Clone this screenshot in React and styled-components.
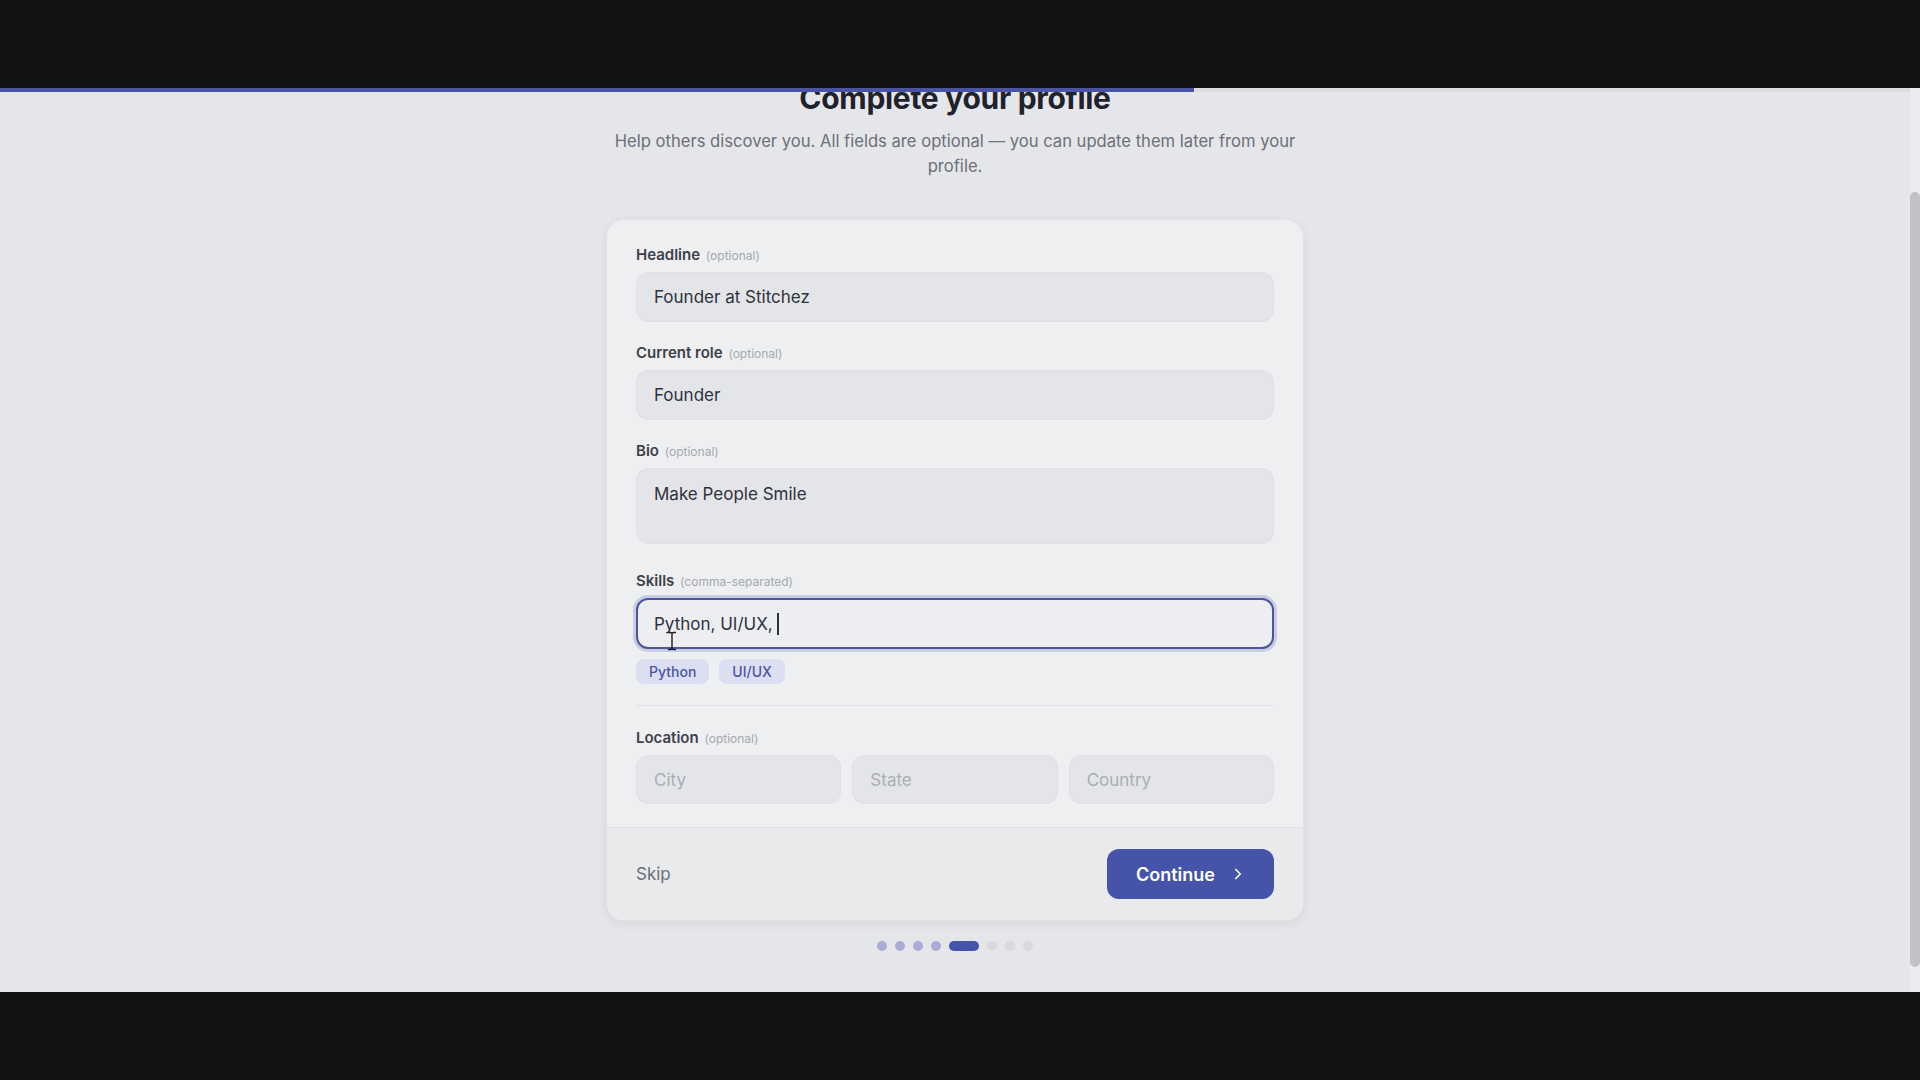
import React, { useLayoutEffect, useRef } from "react";
import styled, { createGlobalStyle } from "styled-components";
import { ChevronRight } from "lucide-react";

const STEPS = 8;
const CURRENT = 5;
const SCROLL_TOP = 121;

const GlobalStyle = createGlobalStyle`
  html, body {
    margin: 0;
    padding: 0;
    height: 100%;
    overflow: hidden;
    background: #111213;
  }
  * { box-sizing: border-box; }
  body {
    font-family: Inter, "Noto Sans", "Liberation Sans", sans-serif;
  }
`;

export default function App() {
  const scrollRef = useRef(null);

  // the capture shows the page scrolled down a bit
  useLayoutEffect(() => {
    if (scrollRef.current) scrollRef.current.scrollTop = SCROLL_TOP;
  }, []);

  return (
    <Screen>
      <GlobalStyle />
      <Letterbox />
      <Viewport>
        <ProgressTrack>
          <ProgressFill style={{ width: `${(CURRENT / STEPS) * 100}%` }} />
        </ProgressTrack>
        <Scroller ref={scrollRef}>
          <Page>
            <Title>Complete your profile</Title>
            <Subtitle>
              Help others discover you. All fields are optional — you can update them later from your
              profile.
            </Subtitle>

            <Card>
              <CardBody>
                <Field>
                  <Label>
                    Headline <Hint>(optional)</Hint>
                  </Label>
                  <Input defaultValue="Founder at Stitchez" />
                </Field>

                <Field>
                  <Label>
                    Current role <Hint>(optional)</Hint>
                  </Label>
                  <Input defaultValue="Founder" />
                </Field>

                <Field $gap={27}>
                  <Label>
                    Bio <Hint>(optional)</Hint>
                  </Label>
                  <TextArea defaultValue="Make People Smile" />
                </Field>

                <Field $gap={0}>
                  <Label>
                    Skills <Hint>(comma-separated)</Hint>
                  </Label>
                  <SkillBox role="textbox">
                    <span>Python, UI/UX,&nbsp;</span>
                    <Caret />
                    <MousePointer width="10" height="20" viewBox="0 0 10 20">
                      <path d="M1.5 1.5 H3.5 Q5 1.5 5 3 Q5 1.5 6.5 1.5 H8.5 M5 3 V17 M1.5 18.5 H3.5 Q5 18.5 5 17 Q5 18.5 6.5 18.5 H8.5" />
                    </MousePointer>
                  </SkillBox>
                  <Chips>
                    <Chip>Python</Chip>
                    <Chip>UI/UX</Chip>
                  </Chips>
                </Field>

                <Divider />

                <Field $gap={0}>
                  <Label>
                    Location <Hint>(optional)</Hint>
                  </Label>
                  <LocationRow>
                    <Input $h={49} placeholder="City" />
                    <Input $h={49} placeholder="State" />
                    <Input $h={49} placeholder="Country" />
                  </LocationRow>
                </Field>
              </CardBody>

              <CardFooter>
                <SkipButton>Skip</SkipButton>
                <PrimaryButton>
                  Continue
                  <ChevronRight size={18} strokeWidth={2.2} />
                </PrimaryButton>
              </CardFooter>
            </Card>

            <Dots>
              {Array.from({ length: STEPS }, (_, i) => (
                <Dot key={i} $state={i + 1 < CURRENT ? "done" : i + 1 === CURRENT ? "active" : "todo"} />
              ))}
            </Dots>
          </Page>
        </Scroller>
        <ScrollTrack>
          <ScrollThumb />
        </ScrollTrack>
      </Viewport>
      <Letterbox />
    </Screen>
  );
}

const Screen = styled.div`
  height: 100vh;
  display: flex;
  flex-direction: column;
  background: #111213;
`;

const Letterbox = styled.div`
  height: 88px;
  flex: none;
  background: #111213;
`;

const Viewport = styled.div`
  position: relative;
  flex: 1;
  min-height: 0;
  display: flex;
  background: #e5e6e9;
`;

const ProgressTrack = styled.div`
  position: absolute;
  top: 0;
  left: 0;
  right: 10px;
  height: 4px;
  background: #dcdde1;
  z-index: 2;
`;

const ProgressFill = styled.div`
  height: 100%;
  background: #4a55a6;
`;

const Scroller = styled.div`
  flex: 1;
  height: 100%;
  overflow-y: auto;
  scrollbar-width: none;

  &::-webkit-scrollbar {
    display: none;
  }
`;

const ScrollTrack = styled.div`
  flex: none;
  width: 10px;
  display: flex;
  flex-direction: column;
  background: #ececee;
`;

const ScrollThumb = styled.div`
  margin-top: 104px;
  height: 775px;
  border-radius: 5px;
  background: #c2c2c4;
`;

const Page = styled.div`
  display: flex;
  flex-direction: column;
  align-items: center;
  padding: 112px 0 84px;
`;

const Title = styled.h1`
  margin: 0;
  font-size: 30px;
  line-height: 38px;
  font-weight: 700;
  color: #1f222b;
  letter-spacing: -0.3px;
`;

const Subtitle = styled.p`
  margin: 12px 0 0;
  max-width: 700px;
  text-align: center;
  font-size: 16.6px;
  line-height: 25px;
  color: #6c707a;
`;

const Card = styled.div`
  margin-top: 40px;
  width: 698px;
  background: #eeeff1;
  border: 1px solid #e1e2e5;
  border-radius: 18px;
  box-shadow: 0 3px 10px rgba(20, 24, 40, 0.07);
  overflow: hidden;
`;

const CardBody = styled.div`
  display: flex;
  flex-direction: column;
  padding: 25px 29px 23px;
`;

const Field = styled.div`
  display: flex;
  flex-direction: column;
  margin-bottom: ${(p) => (p.$gap ?? 21)}px;
`;

const Label = styled.label`
  display: block;
  font-size: 15px;
  line-height: 20px;
  font-weight: 600;
  color: #3d414a;
  margin-bottom: 6px;
`;

const Hint = styled.span`
  font-size: 12px;
  font-weight: 400;
  color: #a4a8b0;
  margin-left: 2px;
`;

const Input = styled.input`
  width: 100%;
  height: ${(p) => p.$h ?? 50}px;
  padding: 0 17px;
  border: 1px solid #dfe0e4;
  border-radius: 12px;
  background: #e4e5e8;
  font-family: inherit;
  font-size: 17px;
  color: #2e323d;
  outline: none;

  &::placeholder {
    color: #a9adb5;
  }
`;

const TextArea = styled.textarea`
  width: 100%;
  height: 76px;
  padding: 12px 17px;
  border: 1px solid #dfe0e4;
  border-radius: 12px;
  background: #e4e5e8;
  font-family: inherit;
  font-size: 17px;
  line-height: 26px;
  color: #2e323d;
  resize: none;
  outline: none;
  display: block;
`;

const SkillBox = styled.div`
  position: relative;
  display: flex;
  align-items: center;
  height: 51px;
  padding: 0 16px;
  border: 2px solid #4a55a6;
  border-radius: 12px;
  background: #eceef2;
  box-shadow: 0 0 0 3px rgba(74, 85, 166, 0.22);
  font-size: 17px;
  color: #2e323d;
  white-space: pre;
`;

const Caret = styled.span`
  width: 1.5px;
  height: 22px;
  background: #2e323d;
`;

const MousePointer = styled.svg`
  position: absolute;
  left: 29px;
  top: 31px;
  fill: none;
  stroke: #1d1f24;
  stroke-width: 1.4;
  stroke-linecap: round;
`;

const Chips = styled.div`
  display: flex;
  gap: 10px;
  margin-top: 10px;
`;

const Chip = styled.span`
  display: inline-flex;
  align-items: center;
  height: 25px;
  padding: 0 13px;
  border-radius: 8px;
  background: #dcdff1;
  color: #4a55a2;
  font-size: 14px;
  font-weight: 500;
`;

const Divider = styled.hr`
  margin: 21px 0 22px;
  border: none;
  border-top: 1px solid #e0e1e4;
`;

const LocationRow = styled.div`
  display: grid;
  grid-template-columns: repeat(3, 1fr);
  gap: 11px;
`;

const CardFooter = styled.div`
  display: flex;
  align-items: center;
  justify-content: space-between;
  padding: 21px 29px;
  border-top: 1px solid #dfe0e3;
  background: #e9eaec;
`;

const SkipButton = styled.button`
  border: none;
  background: none;
  padding: 0;
  font-family: inherit;
  font-size: 17px;
  color: #6b6f78;
  cursor: pointer;
`;

const PrimaryButton = styled.button`
  display: inline-flex;
  align-items: center;
  gap: 14px;
  height: 50px;
  padding: 0 27px 0 29px;
  border: none;
  border-radius: 12px;
  background: #4553a8;
  color: #ffffff;
  font-family: inherit;
  font-size: 18px;
  font-weight: 600;
  cursor: pointer;
`;

const Dots = styled.div`
  display: flex;
  gap: 8px;
  margin-top: 20px;
`;

const Dot = styled.span`
  height: 10px;
  width: ${(p) => (p.$state === "active" ? "30px" : "10px")};
  border-radius: 5px;
  background: ${(p) =>
    p.$state === "active" ? "#4553a8" : p.$state === "done" ? "#a9add6" : "#d8d9dd"};
`;
